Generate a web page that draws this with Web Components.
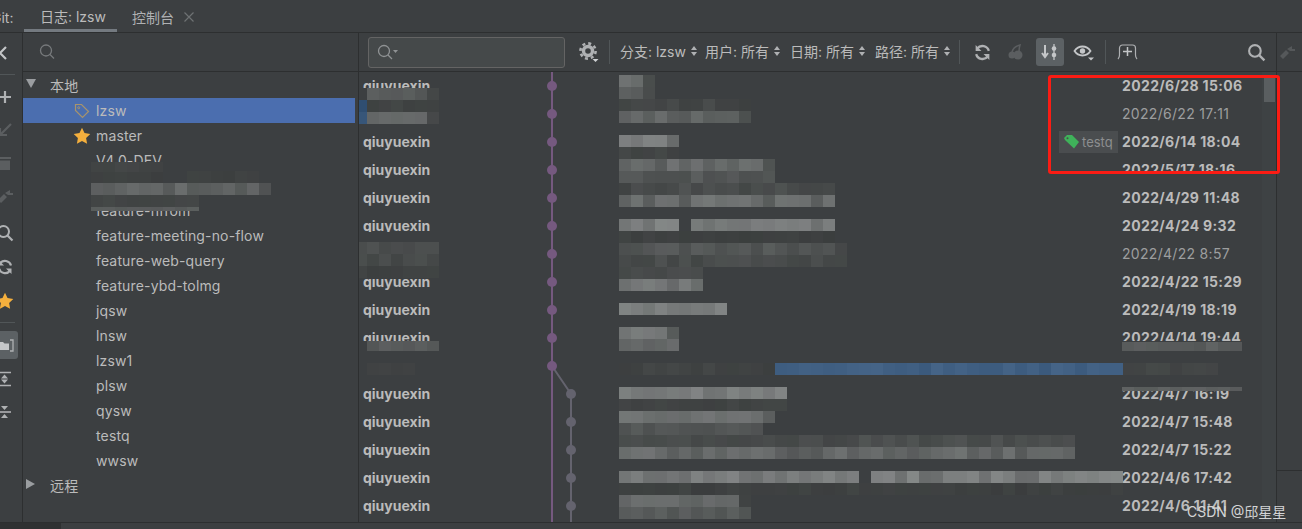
<!DOCTYPE html>
<html><head><meta charset="utf-8"><style>
html,body{margin:0;height:100%;background:#3c3f41;overflow:hidden}
body{font-family:Inter,"Noto Sans CJK SC",sans-serif;font-size:14px;color:#bbb}
</style></head><body>
<git-window></git-window>
<script>
const FONT='Inter,"Noto Sans CJK SC",sans-serif';
function seeded(s){return ()=>(s=(s*9301+49297)%233280)/233280}
class MosaicPatch extends HTMLElement{
  connectedCallback(){
    const x=+this.getAttribute('x'),y=+this.getAttribute('y'),n=+this.getAttribute('n'),g=+this.getAttribute('g'),a=+(this.getAttribute('a')||10);
    const cw=+(this.getAttribute('cw')||12),h=+(this.getAttribute('h')||12);
    const tint=this.getAttribute('tint');
    const r=seeded(x*7+y*13+n);
    let cells='';
    for(let i=0;i<n;i++){
      const v=Math.round(g+(r()-.5)*2*a);
      const c=tint==='blue'?`rgb(${v-6},${v+25},${v+60})`:`rgb(${v},${v+2+Math.round(r()*2)},${v+3})`;
      cells+=`<i style="background:${c}"></i>`;
    }
    this.attachShadow({mode:'open'}).innerHTML=`<style>
      :host{position:absolute;left:${x}px;top:${y}px;display:flex;height:${h}px}
      i{display:block;width:${cw}px;height:${h}px}</style>${cells}`;
  }
}
customElements.define('mosaic-patch',MosaicPatch);

class TabBar extends HTMLElement{
  constructor(){super();this.attachShadow({mode:'open'}).innerHTML=`<style>
  :host{display:flex;height:32px;border-bottom:1px solid #2d2f30;align-items:stretch;font:14px ${FONT};color:#bbb;background:#3c3f41;overflow:hidden}
  .lbl{width:33px;margin-left:-9px;display:flex;align-items:center;padding-top:2px;box-sizing:border-box;flex:none}
  .tab{display:flex;align-items:center;box-sizing:border-box;gap:9px;padding-top:2px}
  .tab.on{border-bottom:3px solid #747a80;width:93px;padding-left:16px;padding-top:3px;flex:none}
  .tab.two{color:#afb1b3;padding-left:15px}
  svg{display:block}
  </style>
  <span class="lbl">Git:</span>
  <span class="tab on">日志: lzsw</span>
  <span class="tab two">控制台<svg width="12" height="12" viewBox="0 0 12 12"><path d="M1.500 1.500l9 9M10.500 1.500l-9 9" stroke="#6e7173" stroke-width="1.200"/></svg></span>`}
}
customElements.define('tab-bar',TabBar);

const ICONS={
 back:'<path d="M10 3L4 9l6 6" fill="none" stroke="#c4c6c8" stroke-width="2.200"/>',
 plus:'<path d="M3 9h12M9 3v12" stroke="#afb1b3" stroke-width="2.200"/>',
 down:'<path d="M15 3L5 13M4 7v7h7" fill="none" stroke="#5b5e60" stroke-width="2.200"/>',
 trash:'<path d="M3 4h12" stroke="#5b5e60" stroke-width="2"/><path d="M4 6.500h10V16H4z" fill="#5b5e60"/>',
 merge:'<path d="M2 13l6-6 3 3-6 6zM9 6l5-3v3h3v2h-5z" fill="#5b5e60"/>',
 search:'<circle cx="7.500" cy="7.500" r="5.500" fill="none" stroke="#afb1b3" stroke-width="2"/><path d="M11.500 11.500l5 5" stroke="#afb1b3" stroke-width="2.200"/>',
 refresh:'<path d="M15 7.500A6.300 6.300 0 0 0 4 5.200M3 10.500A6.300 6.300 0 0 0 14 12.800" fill="none" stroke="#afb1b3" stroke-width="2.200"/><path d="M2.500 2v5.500H8zM15.500 16v-5.500H10z" fill="#afb1b3"/>',
 star:'<path d="M9 .8l2.500 5.300 5.800.8-4.200 4 1 5.800L9 14l-5.100 2.700 1-5.800-4.200-4 5.800-.8z" fill="#f4af3d"/>',
 folder:'<path d="M1 6h5l1.500 1.500H12V14H1z" fill="#c4c6c8"/><path d="M13 4h3v11h-3" fill="none" stroke="#afb1b3" stroke-width="1.300"/>',
 expand:'<path d="M2 2.500h13M2 15.500h13" stroke="#afb1b3" stroke-width="1.600"/><path d="M8.500 4.500l3.500 4H5zM8.500 13.500l-3.500-4h7z" fill="#afb1b3"/>',
 collapse:'<path d="M2 9h13" stroke="#afb1b3" stroke-width="1.600"/><path d="M5 3h7l-3.500 4zM8.500 11l3.500 4H5z" fill="#afb1b3"/>'
};
function ico(n,s=18){return `<svg width="${s}" height="${s}" viewBox="0 0 18 18">${ICONS[n]}</svg>`}

class SideRail extends HTMLElement{
  constructor(){super();this.attachShadow({mode:'open'}).innerHTML=`<style>
  :host{display:flex;flex-direction:column;width:22px;flex:none;border-right:1px solid #2d2f30;overflow:hidden;align-items:flex-start;background:#3c3f41}
  .b{width:24px;height:24px;margin-left:-7px;display:flex;align-items:center;justify-content:center;flex:none}
  hr{border:0;border-top:1px solid #515658;margin:0;width:15px;flex:none}
  .on{background:#5c6164;border-radius:3px;width:25px;height:28px;margin-left:-7px}
  </style>
  <div class="b" style="margin-top:8px">${ico('back')}</div>
  <hr style="margin-top:9px">
  <div class="b" style="margin-top:10px">${ico('plus')}</div>
  <div class="b" style="margin-top:9px">${ico('down')}</div>
  <div class="b" style="margin-top:9px">${ico('trash')}</div>
  <div class="b" style="margin-top:9px">${ico('merge')}</div>
  <div class="b" style="margin-top:13px">${ico('search')}</div>
  <div class="b" style="margin-top:10px">${ico('refresh')}</div>
  <div class="b" style="margin-top:10px">${ico('star')}</div>
  <hr style="margin-top:9px">
  <div class="b on" style="margin-top:8px">${ico('folder')}</div>
  <div class="b" style="margin-top:8px">${ico('expand')}</div>
  <div class="b" style="margin-top:9px">${ico('collapse')}</div>`}
}
customElements.define('side-rail',SideRail);

class TreeRow extends HTMLElement{
  constructor(){super();this.attachShadow({mode:'open'}).innerHTML=`<style>
  :host{display:flex;height:25px;align-items:center;font:14px ${FONT};color:#bbb;flex:none;box-sizing:border-box;letter-spacing:.15px;white-space:nowrap}
  :host([selected]){background:#4b6eaf;margin-right:3px}
  :host([group]){padding-bottom:2px}
  .arrow{width:16px;margin-right:11px;flex:none;display:flex;justify-content:center;padding-bottom:1px;box-sizing:border-box}
  .ic{width:24px;flex:none;margin-left:47px;margin-right:2px;display:flex;justify-content:center;align-items:center}
  :host([group]) .ic{display:none}
  :host(:not([group])) .arrow{display:none}
  </style>
  <span class="arrow"><slot name="arrow"></slot></span><span class="ic"><slot name="icon"></slot></span><slot></slot>`}
}
customElements.define('tree-row',TreeRow);

class BranchPanel extends HTMLElement{
  constructor(){super();
   const names=['V4.0-DEV','','feature-nfrom','feature-meeting-no-flow','feature-web-query','feature-ybd-tolmg','jqsw','lnsw','lzsw1','plsw','qysw','testq','wwsw'];
   const tag='<svg slot="icon" width="16" height="16" viewBox="0 0 16 16"><path d="M1.500 1.500h6l7 7-6 6-7-7z" fill="none" stroke="#a8946c" stroke-width="1.200"/><circle cx="4.700" cy="4.700" r="1" fill="none" stroke="#a8946c"/></svg>';
   const star='<svg slot="icon" width="18" height="18" viewBox="0 0 18 18">'+ICONS.star+'</svg>';
   this.attachShadow({mode:'open'}).innerHTML=`<style>
   :host{display:flex;flex-direction:column;width:335px;flex:none;border-right:1px solid #2d2f30;overflow:hidden;position:relative}
   .search{height:38px;flex:none;border-bottom:1px solid #2d2f30;display:flex;align-items:center;padding-left:15px}
   .tree{display:flex;flex-direction:column;flex:1;padding-top:1px}
   .hide{position:absolute;left:68px;top:129px;width:180px;height:49px;background:#3c3f41}
   svg{display:block}
   </style>
   <div class="search"><svg width="18" height="18" viewBox="0 0 18 18"><circle cx="8" cy="7.500" r="5.500" fill="none" stroke="#777a7c" stroke-width="1.300"/><path d="M12 11.500l4 4" stroke="#777a7c" stroke-width="1.300"/></svg></div>
   <div class="tree">
    <tree-row group><svg slot="arrow" width="12" height="10" viewBox="0 0 12 10"><path d="M1 0h10L6 9z" fill="#9a9da0"/></svg>本地</tree-row>
    <tree-row selected>${tag}lzsw</tree-row>
    <tree-row>${star}master</tree-row>
    ${names.map(n=>`<tree-row>${n}</tree-row>`).join('')}
    <tree-row group><svg slot="arrow" width="12" height="12" viewBox="0 0 12 12"><path d="M1 1l9 5-9 5z" fill="#9a9da0"/></svg>远程</tree-row>
   </div>
   <div class="hide"></div>
   <mosaic-patch x="68" y="129" n="6" g="66" a="3" h="10"></mosaic-patch>
   <mosaic-patch x="68" y="139" n="6" g="62" a="2" h="11"></mosaic-patch>
   <mosaic-patch x="164" y="138" n="6" g="62" a="2"></mosaic-patch>
   <mosaic-patch x="68" y="150" n="15" g="92" a="16"></mosaic-patch>
   <mosaic-patch x="68" y="162" n="9" g="66" a="3"></mosaic-patch>
   <mosaic-patch x="68" y="174" n="9" g="88" a="3" h="4"></mosaic-patch>`;
  }
}
customElements.define('branch-panel',BranchPanel);

class FilterChip extends HTMLElement{
  constructor(){super();this.attachShadow({mode:'open'}).innerHTML=`<style>
  :host{display:flex;align-items:center;gap:5px;font:14px ${FONT};color:#bbb;white-space:nowrap;width:85px;flex:none}
  :host(:last-child){width:84px}
  </style><slot></slot><svg width="6" height="10" viewBox="0 0 6 10"><path d="M3 0l3 4H0zM3 10L0 6h6z" fill="#afb1b3"/></svg>`}
}
customElements.define('filter-chip',FilterChip);

class LogToolbar extends HTMLElement{
  constructor(){super();this.attachShadow({mode:'open'}).innerHTML=`<style>
  :host{display:flex;height:38px;flex:none;border-bottom:1px solid #2d2f30;align-items:center;padding-left:9px;background:#3c3f41}
  .field{width:197px;height:31px;box-sizing:border-box;border:1px solid #646464;border-radius:3px;background:#45494a;display:flex;align-items:center;padding-left:7px;margin-right:9px;flex:none}
  .sep{width:1px;height:24px;background:#515658;flex:none}
  .btn{width:28px;height:28px;display:flex;align-items:center;justify-content:center;flex:none;border-radius:3px;margin-left:6px}
  .btn.on{background:#5c6164}
  .chips{display:flex;margin-left:10px;margin-bottom:2px}
  svg{display:block}
  </style>
  <div class="field"><svg width="24" height="18" viewBox="0 0 24 18"><circle cx="8" cy="8" r="5.500" fill="none" stroke="#8f9294" stroke-width="1.300"/><path d="M12 12l4 4" stroke="#8f9294" stroke-width="1.300"/><path d="M17 7h5l-2.500 3z" fill="#8f9294"/></svg></div>
  <div class="btn" style="margin:0 7px 0 0"><svg width="23" height="22" viewBox="0 0 23 22"><circle cx="11" cy="10" r="4.500" fill="none" stroke="#afb1b3" stroke-width="3.400"/><circle cx="11" cy="10" r="7.600" fill="none" stroke="#afb1b3" stroke-width="2.600" stroke-dasharray="2.980 2.990"/><path d="M15.500 18h6l-3 3z" fill="#d0d2d4"/></svg></div>
  <div class="sep"></div>
  <div class="chips">
   <filter-chip>分支: lzsw</filter-chip><filter-chip>用户: 所有</filter-chip><filter-chip>日期: 所有</filter-chip><filter-chip>路径: 所有</filter-chip>
  </div>
  <div class="sep"></div>
  <div class="btn" style="margin-left:8px">${ico('refresh',19)}</div>
  <div class="btn"><svg width="18" height="18" viewBox="0 0 18 18"><circle cx="5" cy="12" r="3.500" fill="#5b5e60"/><circle cx="11" cy="12" r="4.500" fill="#5b5e60"/><path d="M5 9c1-4 4-6 8-7-1 3-1 5-1 7" fill="none" stroke="#5b5e60" stroke-width="1.500"/></svg></div>
  <div class="btn on"><svg width="20" height="18" viewBox="0 0 20 18"><path d="M5 2v11M2 10l3 4 3-4" fill="none" stroke="#c4c6c8" stroke-width="2"/><path d="M14 1v16" stroke="#c4c6c8" stroke-width="1.300"/><circle cx="14" cy="5.500" r="2.300" fill="#c4c6c8"/><circle cx="14" cy="12" r="2.300" fill="#c4c6c8"/></svg></div>
  <div class="btn"><svg width="22" height="20" viewBox="0 0 22 20"><path d="M1.500 9c4-6 12-6 16 0-4 6-12 6-16 0z" fill="none" stroke="#c4c6c8" stroke-width="1.800"/><circle cx="9.500" cy="9" r="2.700" fill="#c4c6c8"/><path d="M15 15.500h6l-3 3z" fill="#c4c6c8"/></svg></div>
  <div class="sep" style="margin-left:7px"></div>
  <div class="btn" style="margin-left:8px"><svg width="22" height="18" viewBox="0 0 22 18"><path d="M1 16c1-1 1.500-2 1.500-4V5a3 3 0 0 1 3-3h10a3 3 0 0 1 3 3v7c0 2 .5 3 1.500 4" fill="none" stroke="#afb1b3" stroke-width="1.200"/><path d="M6 8.500h9M10.500 4v9" stroke="#c4c6c8" stroke-width="1.500"/></svg></div>
  <div style="flex:1"></div>
  <div class="btn">${ico('search',19)}</div>
  <div style="width:6px"></div>`}
}
customElements.define('log-toolbar',LogToolbar);

class CommitRow extends HTMLElement{
  constructor(){super();const bold=!this.hasAttribute('plain');
   this.attachShadow({mode:'open'}).innerHTML=`<style>
   :host{display:flex;height:28px;flex:none;align-items:center;box-sizing:border-box;padding-bottom:1px;font:${bold?700:400} 14px ${FONT};color:#bbb;white-space:nowrap}
   .a{width:259px;padding-left:4px;box-sizing:border-box;flex:none}
   .m{flex:1;display:flex;justify-content:flex-end;padding-right:4px}
   .d{width:140px;flex:none;box-sizing:border-box;color:${bold?'#bbb':'#9c9e9f'};letter-spacing:${bold?'.35px':'.3px'}}
   </style>
   <span class="a"><slot name="author"></slot></span>
   <span class="m"><slot name="ref"></slot></span>
   <span class="d"><slot></slot></span>`}
}
customElements.define('commit-row',CommitRow);

class RefTag extends HTMLElement{
  constructor(){super();this.attachShadow({mode:'open'}).innerHTML=`<style>
  :host{display:inline-flex;align-items:center;gap:3px;height:22px;width:59px;padding-left:5px;box-sizing:border-box;background:#4a4d4f;font:400 13px ${FONT};color:#8d8f90;letter-spacing:0}
  svg{display:block;flex:none}
  </style><svg width="15" height="14" viewBox="0 0 15 14"><path d="M0 3l3-3h5l7 7-5 6.500L1 5z" fill="#3fb25a"/><circle cx="3.500" cy="3.200" r="1" fill="#4a4d4f"/></svg><slot></slot>`}
}
customElements.define('ref-tag',RefTag);

class CommitGraph extends HTMLElement{
  constructor(){super();
   let nodes='';
   for(let i=0;i<16;i++){const y=14+28*i;nodes+=i<=10?`<circle cx="193" cy="${y}" r="5" fill="#75597f"/>`:`<circle cx="212" cy="${y}" r="5" fill="#64636e"/>`}
   this.attachShadow({mode:'open'}).innerHTML=`<style>:host{position:absolute;left:0;top:0;width:240px;height:450px;pointer-events:none}svg{display:block}</style>
   <svg width="240" height="450" viewBox="0 0 240 450">
    <path d="M193 0V450" stroke="#75597f" stroke-width="2"/>
    <path d="M193 294L212 322V450" fill="none" stroke="#64636e" stroke-width="2"/>
    ${nodes}
   </svg>`}
}
customElements.define('commit-graph',CommitGraph);

class LogPanel extends HTMLElement{
  constructor(){super();
   const rows=[['2022/6/28 15:06'],['2022/6/22 17:11',1,0,1],['2022/6/14 18:04',0,1],['2022/5/17 18:16'],['2022/4/29 11:48'],['2022/4/24 9:32'],['2022/4/22 8:57',1,0,1],['2022/4/22 15:29'],['2022/4/19 18:19'],['2022/4/14 19:44'],['',0,0,1],['2022/4/7 16:19'],['2022/4/7 15:48'],['2022/4/7 15:22'],['2022/4/6 17:42'],['2022/4/6 11:41']];
   const X=x=>x-359,Y=y=>y-72;
   const p=(x,y,n,g,a,extra='')=>`<mosaic-patch x="${X(x)}" y="${Y(y)}" n="${n}" g="${g}" a="${a||8}" ${extra}></mosaic-patch>`;
   const mosaics=[
    p(619,75,2,112),p(643,75,1,76,3),p(619,87,2,92,4),p(643,87,1,74,3),p(619,99,10,68,5),p(739,99,1,62,2),p(619,111,10,98,12),p(739,111,1,76,3),
    p(619,135,4,124,8),p(667,135,1,102,3),p(619,147,5,66,3),
    p(619,159,12,100,12),p(763,159,1,82,4),p(619,171,13,84,8),p(619,183,18,72,8),p(619,195,18,102,14),
    p(619,219,5,122,10),p(691,219,12,118,10),p(619,231,18,62,3),
    p(619,243,18,82,8),p(835,243,1,68,3),p(619,255,19,72,6),p(619,267,7,72,4),p(619,279,7,112,10),
    p(619,303,9,122,8),
    p(619,327,4,118,6),p(667,327,1,88,3),p(619,339,5,100,6),
    p(619,363,13,64,4),p(775,363,29,70,5,'tint="blue"'),
    p(619,387,14,122,10),p(619,399,14,64,3),
    p(619,411,12,108,8),p(763,411,1,90,3),p(619,423,12,82,5),
    p(619,435,18,72,5),p(835,435,20,74,6),p(619,447,38,100,16),
    p(619,471,20,118,12),p(871,471,21,118,16),
    p(619,483,42,62,3),
    p(619,495,10,100,8),p(739,495,1,64,2),p(619,507,11,86,6)
   ].join('');
   const over=`
    <div class="hide" style="left:-4px;top:16px;width:84px;height:47px"></div>
    <div class="hide" style="left:-4px;top:160px;width:84px;height:46px"></div>
    <div class="hide" style="left:-4px;top:269px;width:84px;height:46px"></div>
    <div class="hide" style="left:762px;top:269px;width:128px;height:46px"></div>
    <div class="hide" style="left:741px;top:102px;width:150px;height:12px"></div>
    ${p(355,100,1,52,2,'tint="blue"')}${p(355,112,1,60,2,'tint="blue"')}
    ${p(367,88,5,88,5)}${p(427,88,1,68,2)}${p(367,100,5,64,3)}${p(427,100,1,62,2)}${p(367,112,5,100,6)}${p(427,112,1,68,2)}
    ${p(355,242,7,74,5)}${p(355,254,7,72,6)}${p(355,266,7,62,3)}
    ${p(367,341,6,88,6,'h="10"')}${p(367,363,4,64,2)}
    ${p(1122,342,10,88,8,'h="9"')}${p(1122,363,8,66,3)}${p(1122,387,10,92,4,'h="4"')}`;
   this.attachShadow({mode:'open'}).innerHTML=`<style>
   :host{display:flex;flex-direction:column;flex:1;min-width:0;position:relative}
   .body{flex:1;position:relative;overflow:hidden;display:flex;flex-direction:column;padding-right:14px}
   .scroll{position:absolute;right:0;top:0;bottom:0;width:14px;background:#3e4244}
   .thumb{position:absolute;left:2px;top:5px;width:11px;height:25px;background:#5a5e60}
   .hide{position:absolute;background:#3c3f41}
   </style>
   <log-toolbar></log-toolbar>
   <div class="body">
    <commit-graph></commit-graph>
    ${rows.map(r=>`<commit-row ${r[1]?'plain':''}>${r[3]?'':'<span slot="author" style="font-weight:700;color:#bbb">qiuyuexin</span>'}${r[2]?'<ref-tag slot="ref">testq</ref-tag>':''}${r[0]}</commit-row>`).join('')}
    ${over}
    ${mosaics}
    <div class="scroll"><div class="thumb"></div></div>
   </div>`}
}
customElements.define('log-panel',LogPanel);

class EdgePanel extends HTMLElement{
  constructor(){super();this.attachShadow({mode:'open'}).innerHTML=`<style>
  :host{display:flex;flex-direction:column;width:25px;flex:none;border-left:1px solid #2d2f30}
  .t{height:38px;border-bottom:1px solid #2d2f30;flex:none;display:flex;align-items:center;padding-left:1px}
  .u{height:398px;flex:none;border-bottom:1px solid #2d2f30}
  </style><div class="t"><svg width="18" height="18" viewBox="0 0 18 18"><path d="M2 13l6-6 3 3-6 6zM9 6l5-3v3h3v2h-5z" fill="#55585a"/></svg></div><div class="u"></div>`}
}
customElements.define('edge-panel',EdgePanel);

class GitWindow extends HTMLElement{
  constructor(){super();this.attachShadow({mode:'open'}).innerHTML=`<style>
  :host{display:flex;flex-direction:column;width:1302px;height:529px;position:relative;overflow:hidden;background:#3c3f41}
  .main{display:flex;height:489px;flex:none;border-bottom:1px solid #2d2f30}
  .foot{flex:1;display:flex}
  .foot i{display:block;width:61px;background:#2f3132}
  .wm{position:absolute;left:1187px;top:501px;font:14px ${FONT};color:#d4d5d6;white-space:nowrap}
  .mark{position:absolute;left:1048px;top:75px;width:232px;height:99px;box-sizing:border-box;border:3px solid #fb1c14;border-radius:3px;pointer-events:none}
  </style>
  <tab-bar></tab-bar>
  <div class="main"><side-rail></side-rail><branch-panel></branch-panel><log-panel></log-panel><edge-panel></edge-panel></div>
  <div class="foot"><i></i></div>
  <div class="mark"></div>
  <span class="wm">CSDN @邱星星</span>`}
}
customElements.define('git-window',GitWindow);
</script>
</body></html>
